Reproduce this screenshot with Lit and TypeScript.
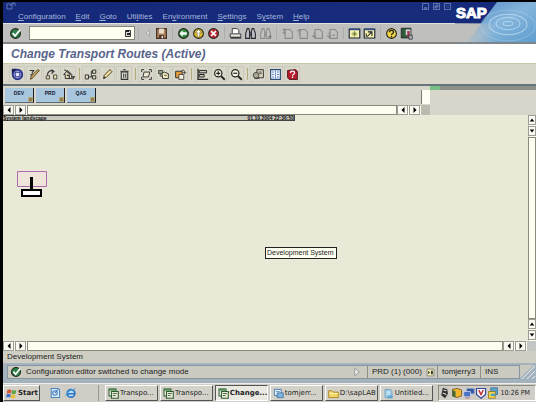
import { LitElement, html, css, svg, nothing } from "lit";
import type { TemplateResult } from "lit";
import { customElement, property } from "lit/decorators.js";
import { classMap } from "lit/directives/class-map.js";

const ball = (fill: string, mark: TemplateResult) => svg`
  <circle cx="8" cy="8" r="6" fill=${fill} stroke="#26261c" stroke-width="1.4"/>${mark}`;
const page = (mark: TemplateResult) => svg`
  <g fill="none" stroke="#8b8b88" stroke-width="1.3"><path d="M5 3h6l3 3v8H5z"/>${mark}</g>`;
const lens = (mark: string) => svg`
  <circle cx="6.5" cy="6.5" r="4.5" fill="#f8f8ec" stroke="#26261c" stroke-width="1.5"/>
  <path d="M10 10l4.5 4.5" stroke="#26261c" stroke-width="2.4"/>
  <path d=${mark} stroke="#26261c" stroke-width="1.5"/>`;
const binoculars = (c: string, f: string) => svg`
  <g fill=${f} stroke=${c} stroke-width="1.3"><path d="M4 2h2l1 4v8H2V8z"/><path d="M10 2h2l2 6v6H9V6z"/><path d="M7 7h2v3H7z"/></g>`;

const ICONS: Record<string, TemplateResult> = {
  check: ball("#2c7f49", svg`<path d="M4.500 7.500l3 3.500 6-7.500" fill="none" stroke="#fff" stroke-width="2.2"/>`),
  collapse: svg`<path d="M10 3v10L5 8z" fill="#e4e4e0" stroke="#8e8e8a"/>`,
  save: svg`<path d="M2 2h12v12H2z" fill="#a9835f" stroke="#4b3224" stroke-width="1.5"/><path d="M5 2h6v6H5z" fill="#e9dcc8"/><path d="M5 10h6v4H5z" fill="#4b3224"/><path d="M8 11h2v3H8z" fill="#e9dcc8"/>`,
  back: ball("#2f8a3e", svg`<path d="M3 8l4-4v2.500h5v3H7V12z" fill="#fff"/>`),
  exit: ball("#e5bd2d", svg`<path d="M8 3l4 4H9.500v5h-3V7H4z" fill="#fff" stroke="#5c4a10" stroke-width=".6"/>`),
  cancel: ball("#c52a35", svg`<path d="M5 5l6 6M11 5l-6 6" stroke="#fff" stroke-width="2"/>`),
  print: svg`<path d="M4 8V2h6l2 2v4" fill="#fff" stroke="#222"/><path d="M1.500 8.500h13v4h-13z" fill="#e8e8e0" stroke="#222"/><path d="M2 13.500h13" stroke="#222" stroke-width="1.500"/>`,
  find: binoculars("#26262c", "#b9bdc8"),
  findNext: svg`${binoculars("#8d8d8a", "#c2c2be")}<path d="M11 12h5M13.500 9.500v5" stroke="#777"/>`,
  first: page(svg`<path d="M2 7h4M4 9V2M2 4l2-2 2 2"/>`),
  prev: page(svg`<path d="M4 10V3M1.500 5.500L4 3l2.500 2.500"/>`),
  next: page(svg`<path d="M4 6v7M1.500 10.500L4 13l2.500-2.500"/>`),
  last: page(svg`<path d="M4 6v7M1.500 10.500L4 13l2.500-2.500M8 10h3"/>`),
  session: svg`<path d="M1.500 2.500h13v11h-13z" fill="#f6f3b4" stroke="#1d2430" stroke-width="1.4"/><path d="M2 2h12v2H2z" fill="#2f4f8c"/><path d="M8 5v7M4.500 8.500h7M6 6.500l4 4M10 6.500l-4 4" stroke="#5d6d20" stroke-width=".9"/>`,
  shortcut: svg`<path d="M1.500 2.500h13v11h-13z" fill="#f6f3b4" stroke="#1d2430" stroke-width="1.400"/><path d="M2 2h12v2H2z" fill="#2f4f8c"/><path d="M5 12l5-5M6 6h5v5M4 8v4" fill="none" stroke="#222" stroke-width="1.3"/>`,
  help: ball("#f0d545", svg`<path d="M5.500 6.500c0-3 5-3 5 0 0 1.700-2.500 1.500-2.500 3.500M8 11.200v1.600" fill="none" stroke="#26261c" stroke-width="1.6"/>`),
  layout: svg`<path d="M1.500 1.500h12v12h-12z" fill="#2d5a3a" stroke="#222"/><path d="M7 3h6v7H7z" fill="#d0d3d6"/><path d="M9 5h3v8H9z" fill="#a03550"/><path d="M11 10h4v5h-4z" fill="#b8b8c4" stroke="#333"/>`,
  display: svg`<circle cx="8" cy="8" r="5.800" fill="#fff" stroke="#28348c" stroke-width="2.400"/><path d="M5 5h6v6H5z" fill="#dfe5ff" stroke="#28348c" stroke-width="1.600"/><path d="M1 1h6L1 7z" fill="#1c2356"/>`,
  edit: svg`<path d="M2 3h5L5 6M3 9l3-2" fill="none" stroke="#333" stroke-width="1.3"/><path d="M14 3L6 12l-3 2 1-4 8-8z" fill="#d9b25c" stroke="#3b3018"/>`,
  route: svg`<path d="M3 9c0-5 4-7 7-5M8 2l3 2-3 3" fill="none" stroke="#333" stroke-width="1.400"/><path d="M1.500 9.500h4v4h-4zM10.500 8.500h4v5h-4z" fill="#e6dca8" stroke="#333"/>`,
  house: svg`<path d="M2 8l5-5 5 5v5H4V8z" fill="#d8d2b0" stroke="#333" stroke-width="1.200"/><path d="M3 2l8 6M6 9h3v4M12 11h3l-2 3" fill="none" stroke="#333" stroke-width="1.400"/>`,
  tree: svg`<path d="M5 11h4V4h2M9 11h2" fill="none" stroke="#333" stroke-width="1.200"/><path d="M1.500 8.500h4v5h-4zM10.500 2.500h4v4h-4zM10.500 9.500h4v4h-4z" fill="#e0d8b8" stroke="#333" stroke-width="1.200"/>`,
  pencil: svg`<path d="M3 13l1-4 7-7 2.500 2.500-7 7z" fill="#efe0a0" stroke="#4a3e22" stroke-width="1.200"/><path d="M3 13l1-3 2 2z" fill="#333"/>`,
  trash: svg`<path d="M4 5h8v9H4z" fill="#dadace" stroke="#333" stroke-width="1.300"/><path d="M3 4h10M6.500 2h3M7 7v5M9.500 7v5" stroke="#333" stroke-width="1.200"/>`,
  select: svg`<path d="M2 5V2h3M11 2h3v3M14 11v3h-3M5 14H2v-3" fill="none" stroke="#333" stroke-width="1.200"/><path d="M5 5h7l-1.500 6H3.500z" fill="#f0ecd0" stroke="#333" stroke-width="1.200"/>`,
  copy: svg`<path d="M2 3h5v4H2z" fill="#8fa58c" stroke="#333"/><path d="M6 7l3-2 5 2v6H7z" fill="#efe8bc" stroke="#333" stroke-width="1.200"/><path d="M4 7v3h3M9 9h3" stroke="#333" fill="none"/>`,
  paste: svg`<path d="M2 4h8v8H2z" fill="#e59a3c" stroke="#333" stroke-width="1.200"/><path d="M9 4c1-2 3-2 4 0v3M11 5l2 2 2-2" fill="none" stroke="#333"/><path d="M6 8h6v6H6z" fill="#f7f2da" stroke="#333"/>`,
  align: svg`<path d="M2.500 1v13H15" fill="none" stroke="#222" stroke-width="1.600"/><path d="M4 3h9v3H4zM4 8h6v3H4z" fill="#c9c9ba" stroke="#222" stroke-width="1.200"/>`,
  zoomIn: lens("M4 6.500h5M6.500 4v5"),
  zoomOut: lens("M4 6.500h5"),
  transport: svg`<path d="M6 2h8v10H6z" fill="#ded8c0" stroke="#333" stroke-width="1.200"/><circle cx="5" cy="9" r="3.500" fill="#a8a894" stroke="#333"/><path d="M8 5h4M9 7h3M3 13h6" stroke="#333"/>`,
  legend: svg`<path d="M2 2h12v12H2z" fill="#eef4ff" stroke="#2d4c74" stroke-width="1.400"/><path d="M8 2v12" stroke="#5f86b8"/><path d="M4 5h2M4 8h2M4 11h2M10 5h2M10 8h2M10 11h2" stroke="#3d6da8" stroke-width="1.300"/>`,
  manual: svg`<path d="M2 3l10-1 2 2v10H4l-2-2z" fill="#b81f2e" stroke="#4e1118" stroke-width="1.200"/><path d="M5.500 6c0-3 5-3 5 0 0 2-2.500 1.500-2.500 3.500M8 10.500v1.700" fill="none" stroke="#fff" stroke-width="1.500"/>`,
  flag: svg`<path d="M2 3q3-2 6 0l-1 5q-2-1.500-6 0z" fill="#d95232"/><path d="M9 3q3 1.500 6 0l-1 5q-3 1.500-6 0z" fill="#5fa044"/><path d="M1 9q3-1.500 6 0l-1 5q-3-1.500-6 0z" fill="#3f6ec0"/><path d="M8 9q3 1.500 6 0l-1 5q-3 1.500-6 0z" fill="#e8bd38"/>`,
  desktop: svg`<path d="M3 2h9l2 2v10H3z" fill="#dcebf8" stroke="#4a87c0" stroke-width="1.400"/><circle cx="8" cy="8" r="3" fill="none" stroke="#3c7cc0" stroke-width="1.400"/><path d="M8 8l4-5" stroke="#265c9a" stroke-width="1.300"/>`,
  browser: svg`<circle cx="8" cy="8.500" r="5" fill="#bfe0f6" stroke="#2b77c4" stroke-width="2.400"/><path d="M4 9h9" stroke="#2b77c4" stroke-width="2"/><path d="M1 12Q0 7 14 2" fill="none" stroke="#58a8dc" stroke-width="1.300"/>`,
  sapgui: svg`<path d="M1.500 1.500h10v10h-10z" fill="#f4f4e4" stroke="#2e5b36" stroke-width="1.500"/><path d="M5 5h10v10H5z" fill="#e6ead0" stroke="#2e5b36" stroke-width="1.500"/><path d="M1 1h11v3H1z" fill="#4f8a50"/><path d="M7 8h6M7 11h4" stroke="#55705a" stroke-width="1.500"/>`,
  chat: svg`<path d="M2 2h10v9H2z" fill="#eef5fb" stroke="#3977ae" stroke-width="1.300"/><path d="M6 7h9v7H6z" fill="#7eb4de" stroke="#2a6397"/><path d="M4 5h6" stroke="#3977ae"/>`,
  folder: svg`<path d="M1 4h5l2 2h7v8H1z" fill="#f1d565" stroke="#a27d20" stroke-width="1.200"/><path d="M2 8h12" stroke="#fff2b0" stroke-width="1.500"/>`,
  notepad: svg`<path d="M3 2h8l2 3v9H3z" fill="#9dcdea" stroke="#5a93ba"/><path d="M5 6h6M5 9h5" stroke="#fff"/><path d="M7 11h7v4H7z" fill="#5aa7d2"/>`,
  mouse: svg`<path d="M5 1l6 2 1 6-4 6-5-4 1-5z" fill="#333"/><path d="M6 4l4 1M5 8l5 2" stroke="#ddd" stroke-width="1.500"/>`,
  shield: svg`<path d="M2 3l7-1 5 2v8l-6 2-6-2z" fill="#f0b62e" stroke="#69450c"/><path d="M2 4l4 2v8l-4-2z" fill="#3d6c3b"/>`,
  network: svg`<path d="M5 2h10v7H5z" fill="#3558a5" stroke="#8fa3c5"/><path d="M1 6h9v7H1z" fill="#4873c4" stroke="#cbd7ea"/><path d="M3 14.500h6" stroke="#a55"/>`,
  virus: svg`<path d="M2 2h12v8l-6 5-6-5z" fill="#fff" stroke="#34439c" stroke-width="1.600"/><path d="M5 4l3 6 3-6" fill="none" stroke="#c22c38" stroke-width="2"/>`,
  vmware: svg`<path d="M5 1h9v9H5z" fill="#5aa0cc" stroke="#3a6e91"/><path d="M2 6h9v9H2z" fill="#f2d34b" stroke="#8b6f12"/><path d="M5 9h6v3H5z" fill="#4b9dc9"/>`,
  list: svg`<path d="M2 2h12v12H2z" fill="#f4f0b8" stroke="#555"/><path d="M4 5l3 3-3 3zM9 5h3v6H9z" fill="#222"/>`,
};

const icon = (name: string) => html`<svg class="icon" viewBox="0 0 16 16" aria-hidden="true">${ICONS[name]}</svg>`;

@customElement("scroll-bar")
export class ScrollBar extends LitElement {
  @property({ reflect: true }) direction: "horizontal" | "vertical" = "horizontal";

  static styles = css`
    :host { display: flex; background: #fdfdf0; min-width: 0; }
    :host([direction="vertical"]) { flex-direction: column; }
    :host([direction="vertical"]) button { width: 8px; }
    button { box-sizing: border-box; flex: none; padding: 0; border: 1px solid #9c9c94; background: #fafaf2; width: 11px; height: 10px; display: grid; place-items: center; }
    svg { width: 6px; height: 6px; display: block; }
    .gap { background: #cfcec2; flex: none; width: 1px; height: 1px; }
    .track { flex: 1; min-width: 0; box-sizing: border-box; border: 1px solid #8a8a7e; background: #fefef0; }
  `;

  private pair() {
    const vertical = this.direction === "vertical";
    const [a, b] = vertical ? ["M1 6h6L4 2z", "M1 2h6L4 6z"] : ["M6 0v8L2 4z", "M2 0v8l4-4z"];
    return html`
      <button aria-label=${vertical ? "Scroll up" : "Scroll left"}><svg viewBox="0 0 8 8"><path d=${a}/></svg></button>
      <span class="gap"></span>
      <button aria-label=${vertical ? "Scroll down" : "Scroll right"}><svg viewBox="0 0 8 8"><path d=${b}/></svg></button>
      <span class="gap"></span>`;
  }

  render() {
    return html`${this.pair()}<div class="track"></div>${this.pair()}`;
  }
}

@customElement("app-root")
export class AppRoot extends LitElement {
  static styles = css`
    :host {
      display: flex; flex-direction: column; box-sizing: border-box; min-height: 100vh;
      border-left: 3px solid #000; border-top: 2px solid #000; background: #d6d4c6;
      font: 8px/12px "Liberation Sans", Arial, sans-serif; color: #22221e; overflow: hidden;
    }
    button, input { font: inherit; color: inherit; margin: 0; padding: 0; }
    a { color: inherit; text-decoration: none; }
    .icon { width: 12px; height: 12px; display: block; flex: none; }
    .tool { border: 0; background: none; width: 15px; height: 16px; display: grid; place-items: center; flex: none; }
    .tool .icon { width: 13px; height: 13px; }
    .sep { width: 1px; height: 12px; background: #a3a39c; flex: none; }

    .header { display: grid; grid-template-columns: 1fr 81px; }
    .blue { background: linear-gradient(90deg, #14297a, #182c7c); color: #a5b7dc; }
    .titlebar { display: flex; align-items: center; justify-content: space-between; height: 9px; padding: 0 4px 0 3px; }
    .titlebar .icon { width: 10px; height: 9px; }
    .winbtns { display: flex; gap: 4px; }
    .winbtns button { box-sizing: border-box; width: 7px; height: 7px; border: 1px solid #5c70ab; background: none; display: grid; place-items: center; }
    .winbtns svg { width: 5px; height: 5px; display: block; }
    .menu { display: flex; gap: 10px; padding: 0 15px; height: 12px; line-height: 12px; }
    .menu u { text-underline-offset: 1px; }
    .std { display: flex; align-items: center; height: 18px; border-top: 1px solid #e2e2e2; border-bottom: 2px solid #85857f; background: #bfbfbd; padding-left: 5px; }
    .std .sep { margin: 0 3px; background: #adada8; }
    .std .narrow { width: 12px; }
    .narrow .icon { width: 10px; height: 10px; }
    .command { display: flex; align-items: center; box-sizing: border-box; width: 106px; height: 14px; margin-left: 6px; background: #fffff0; border: 1px solid #85857d; }
    .command input { flex: 1; min-width: 0; border: 0; background: none; outline: none; height: 10px; padding: 0 2px; }
    .command button { border: 0; background: none; width: 12px; height: 10px; display: grid; place-items: center; }
    .command svg { width: 8px; height: 8px; display: block; }
    .brand { grid-column: 2; grid-row: 1 / span 3; position: relative; background: #14297a; }
    .brand svg { position: absolute; inset: 0; width: 100%; height: 100%; display: block; }
    .brand b { position: relative; display: block; padding-left: 1px; font-size: 15px; line-height: 21px; color: #fff; -webkit-text-stroke: 1px #fff; }

    h1 { margin: 0; padding-left: 8px; background: #fff; color: #59658c; font-size: 12px; line-height: 20px; height: 19px; font-style: italic; font-weight: bold; border-bottom: 1px solid #c9c6a8; }

    .apptools { display: flex; align-items: center; gap: 1px; height: 20px; padding-left: 6px; background: #d9d7ca; border-bottom: 2px solid #67757c; }
    .apptools .tool { width: 16px; box-sizing: border-box; border: 1px solid #cccabc; }
    .apptools .sep { margin: 0 1px 0 2px; background: #b2ab7b; }

    .systems { display: flex; align-items: flex-start; gap: 2px; padding: 2px 0 0 2px; height: 17px; background: #d8d6ca; }
    .system { position: relative; box-sizing: border-box; width: 29px; height: 15px; border: 0; border-right: 1px solid #222; border-bottom: 1px solid #5e6c78; background: #a9c6df; font-size: 5px; font-weight: bold; line-height: 10px; padding-bottom: 4px; color: #15202c; }
    .system i { position: absolute; right: 0; bottom: 0; width: 3px; height: 3px; background: #927f50; border: 1px solid #b5a878; }
    .spacer { flex: 1; }
    .overview { display: flex; flex-direction: column; width: 115px; margin-top: -2px; }
    .overview .strip { height: 4px; margin-left: 9px; background: linear-gradient(90deg, #74bf83 10px, #8b8f8a 10px); }
    .overview .thumb { width: 8px; height: 14px; background: #fefef2; border-left: 1px solid #777; }
    .hscroll { display: grid; grid-template-columns: 1fr 115px; }
    .rest { background: linear-gradient(90deg, #bdbbb0 9px, #d8d6ca 9px); }
    .hscroll.foot { grid-template-columns: 1fr 9px; }
    .foot .rest { background: #c3c6c4; }

    .work { display: flex; flex: 1; min-height: 0; }
    .canvas { position: relative; flex: 1; min-width: 0; background: #eae9d8; }
    .caption { display: flex; justify-content: space-between; box-sizing: border-box; width: 292px; height: 6px; border: 1px solid #444; border-left: 0; background: #c9c8bd; font-size: 5px; line-height: 4px; font-weight: bold; color: #111; }
    .node { position: absolute; left: 14px; top: 56px; width: 30px; height: 28px; display: block; }
    .tip { position: absolute; left: 262px; top: 132px; border: 1px solid #222; background: #fffff0; font-size: 7px; line-height: 10px; padding: 0 2px 0 1px; white-space: nowrap; }

    .hint { padding-left: 4px; line-height: 12px; background: #cfcec3; }
    .statuswrap { background: #a4b2be; padding: 2px 0 4px 4px; display: flex; }
    .status { flex: 1; display: flex; align-items: center; height: 14px; box-sizing: border-box; border: 1px solid #8797a2; background: #cbcac0; padding-left: 2px; gap: 4px; }
    .status p { margin: 0; flex: 1; }
    .cell { padding-left: 4px; border-left: 1px solid #8f8f86; display: flex; align-items: center; gap: 4px; box-sizing: border-box; white-space: nowrap; }
    .cell .icon { width: 9px; height: 9px; }
    .c-sys { width: 66px; }
    .c-host { width: 39px; }
    .c-ins { width: 39px; }
    .grip { width: 16px; height: 14px; display: block; }

    .taskbar { display: flex; align-items: center; height: 18px; background: #cfcdc5; font: 7px/12px "DejaVu Sans", Verdana, sans-serif; border-top: 1px solid #efeee8; }
    .start { display: flex; align-items: center; gap: 1px; box-sizing: border-box; width: 37px; height: 16px; padding-left: 2px; border: 1px solid; border-color: #fff #555 #555 #fff; background: #d4d2c8; font-weight: bold; }
    .start .icon, .task .icon { width: 11px; height: 11px; }
    .quick { display: flex; gap: 4px; margin-left: 9px; flex: none; width: 49px; }
    .quick button { width: 12px; height: 14px; border: 0; background: none; display: grid; place-items: center; }
    .tasks { flex: 1; min-width: 0; display: grid; grid-template-columns: repeat(6, 1fr); gap: 2px; padding: 0 5px 0 6px; border-left: 1px solid #9a988e; }
    .task { display: flex; align-items: center; gap: 1px; box-sizing: border-box; min-width: 0; height: 16px; padding-left: 2px; border: 1px solid; border-color: #fff #555 #555 #fff; background: #d4d2c8; white-space: nowrap; overflow: hidden; }
    .task.active { font-weight: bold; background: #e9e8e1; border-color: #555 #fff #fff #555; }
    .tray { display: flex; align-items: center; box-sizing: border-box; height: 16px; padding: 0 5px 0 0; border: 1px solid; border-color: #8d8b82 #fff #fff #8d8b82; }
    .tray time { margin-left: 2px; white-space: nowrap; font-family: "DejaVu Sans Condensed", "DejaVu Sans", sans-serif; font-stretch: normal; }
  `;

  private tools(names: string[]) {
    return names.map((n) => n === "|"
      ? html`<span class="sep"></span>`
      : html`<button class=${classMap({ tool: true, narrow: n === "collapse" })} aria-label=${n}>${icon(n)}</button>`);
  }

  private task(name: string, label: string, active = false) {
    return html`<button class=${classMap({ task: true, active })}>${icon(name)}<span>${label}</span></button>`;
  }

  render() {
    const menu: [string, string, string][] = [
      ["", "C", "onfiguration"], ["", "E", "dit"], ["", "G", "oto"], ["Uti", "l", "ities"],
      ["En", "v", "ironment"], ["", "S", "ettings"], ["S", "y", "stem"], ["", "H", "elp"],
    ];
    return html`
      <header class="header">
        <div class="titlebar blue">
          <svg class="icon" viewBox="0 0 10 9"><path d="M1 2h5v5H1zM4 4l4-3M6 1h3v3" fill="none" stroke="#6175b0"/></svg>
          <div class="winbtns">
            <button aria-label="Minimize"><svg viewBox="0 0 5 5"><path d="M1 4h3" stroke="#8fa0ce"/></svg></button>
            <button aria-label="Restore"><svg viewBox="0 0 5 5"><path d="M1 2h2v2H1zM2 1h2v2" fill="none" stroke="#6d80b8"/></svg></button>
            <button aria-label="Close"><svg viewBox="0 0 5 5"><path d="M1 1l3 3M4 1L1 4" stroke="#3b4f90"/></svg></button>
          </div>
        </div>
        <nav class="menu blue">
          ${menu.map(([a, k, b]) => html`<a href="#">${a || nothing}<u>${k}</u>${b}</a>`)}
        </nav>
        <div class="std">
          <button class="tool" aria-label="Enter">${icon("check")}</button>
          <label class="command">
            <input aria-label="Command" />
            <button aria-label="Command history"><svg viewBox="0 0 8 8"><path d="M1.500 1.500h5v6h-5z" fill="#ddd" stroke="#333"/><path d="M2 1h3v2H2zM3 4h3v2H3z" fill="#222"/></svg></button>
          </label>
          ${this.tools(["|", "collapse", "save", "|", "back", "exit", "cancel", "|", "print", "find", "findNext", "|", "first", "prev", "next", "last", "|", "session", "shortcut", "|", "help", "layout"])}
        </div>
        <div class="brand">
          <svg viewBox="0 0 81 41" preserveAspectRatio="none">
            <defs>
              <linearGradient id="water" x1="0" x2="1" y1="0" y2="1"><stop offset="0" stop-color="#4e86bf"/><stop offset=".5" stop-color="#84b5dc"/><stop offset="1" stop-color="#5d9ccc"/></linearGradient>
              <linearGradient id="fade"><stop offset=".1" stop-color="#bfbfbd"/><stop offset=".5" stop-color="#bfbfbd" stop-opacity="0"/></linearGradient>
            </defs>
            <path d="M0 21h81v20H0z" fill="#bfbfbd"/>
            <path d="M42 0h39v41H8q12-10 18-20z" fill="url(#water)"/>
            <path d="M0 21h81v20H0z" fill="url(#fade)"/>
            <g fill="none" stroke="#c7e2f4" stroke-opacity=".7"><ellipse cx="53" cy="21" rx="5" ry="2"/><ellipse cx="53" cy="21" rx="12" ry="6"/><ellipse cx="53" cy="22" rx="19" ry="10"/><ellipse cx="53" cy="23" rx="27" ry="15" stroke-opacity=".3"/></g>
            <path d="M0 39h81v2H0z" fill="#7c868c"/>
          </svg>
          <b>SAP</b>
        </div>
      </header>
      <h1>Change Transport Routes (Active)</h1>
      <div class="apptools">
        ${this.tools(["display", "edit", "route", "house", "|", "tree", "pencil", "trash", "|", "select", "copy", "paste", "|", "align", "zoomIn", "zoomOut", "|", "transport", "legend", "manual"])}
      </div>
      <div class="systems">
        ${["DEV", "PRD", "QAS"].map((s) => html`<button class="system">${s}<i></i></button>`)}
        <span class="spacer"></span>
        <div class="overview"><div class="strip"></div><div class="thumb"></div></div>
      </div>
      <div class="hscroll"><scroll-bar></scroll-bar><div class="rest"></div></div>
      <main class="work">
        <section class="canvas">
          <div class="caption"><span>System landscape</span><span>01.10.2004 22:36:50</span></div>
          <svg class="node" viewBox="0 0 30 28" role="img" aria-label="System node">
            <path d="M.5 .5h29v15H.500z" fill="#efe4da" stroke="#b06ab0"/>
            <path d="M13 6h3v12h-3z"/><path d="M5 19h19v6H5z" fill="#fff" stroke="#000" stroke-width="2"/>
          </svg>
          <div class="tip" role="tooltip">Development System</div>
        </section>
        <scroll-bar direction="vertical"></scroll-bar>
      </main>
      <div class="hscroll foot"><scroll-bar></scroll-bar><div class="rest"></div></div>
      <div class="hint">Development System</div>
      <div class="statuswrap">
        <div class="status" role="status">
          ${icon("check")}<p>Configuration editor switched to change mode</p>
          <svg class="icon" viewBox="0 0 16 16"><path d="M5 3l6 5-6 5z" fill="#eee" stroke="#888"/></svg>
          <span class="cell c-sys">PRD (1) (000) ${icon("list")}</span>
          <span class="cell c-host">tomjerry3</span>
          <span class="cell c-ins">INS</span>
        </div>
        <svg class="grip" viewBox="0 0 16 14"><path d="M0 0h14L0 13z" fill="#cbcac0"/><path d="M2 14L15 1M7 14l8-8M12 14l3-3" stroke="#e4ecf2"/></svg>
      </div>
      <footer class="taskbar">
        <button class="start">${icon("flag")}<span>Start</span></button>
        <div class="quick">
          <button aria-label="Show desktop">${icon("desktop")}</button>
          <button aria-label="Internet browser">${icon("browser")}</button>
        </div>
        <div class="tasks">
          ${this.task("sapgui", "Transpo...")}
          ${this.task("sapgui", "Transpo...")}
          ${this.task("sapgui", "Change...", true)}
          ${this.task("chat", "tomjerr...")}
          ${this.task("folder", "D:\\sapLAB")}
          ${this.task("notepad", "Untitled...")}
        </div>
        <div class="tray">
          ${["mouse", "shield", "network", "virus", "vmware"].map((n) => icon(n))}
          <time>10:26 PM</time>
        </div>
      </footer>
    `;
  }
}
